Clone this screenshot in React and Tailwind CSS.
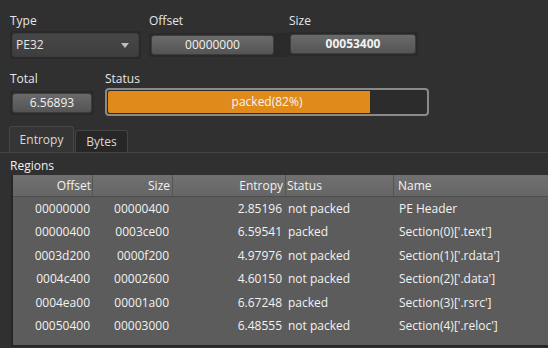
const rows = [
  ["00000000", "00000400", "2.85196", "not packed", "PE Header"],
  ["00000400", "0003ce00", "6.59541", "packed", "Section(0)['.text']"],
  ["0003d200", "0000f200", "4.97976", "not packed", "Section(1)['.rdata']"],
  ["0004c400", "00002600", "4.60150", "not packed", "Section(2)['.data']"],
  ["0004ea00", "00001a00", "6.67248", "packed", "Section(3)['.rsrc']"],
  ["00050400", "00003000", "6.48555", "not packed", "Section(4)['.reloc']"],
];

function ValueBox({ children, bold, width }) {
  return (
    <div className="p-[2px] bg-[#2a2a2a] rounded-[2px]">
      <div
        className={`${width} h-[20px] flex items-center justify-center rounded-[3px] border border-[#3c3c3c] bg-gradient-to-b from-[#6a6a6a] to-[#545454] text-[12px] text-[#f2f2f2] ${bold ? "font-bold" : ""}`}
      >
        {children}
      </div>
    </div>
  );
}

export default function App() {
  return (
    <div className="w-[548px] h-[348px] bg-[#303030] text-[#e6e6e6] text-[12px] overflow-hidden font-['Open_Sans',sans-serif]">
      {/* Type / Offset / Size */}
      <div className="flex pl-[10px] pt-[13px]">
        <div className="w-[139px]">
          <div className="leading-[16px] h-[18px]">Type</div>
          <div className="p-[2px] bg-[#2a2a2a] w-[131px] rounded-[2px]">
            <div className="h-[24px] flex items-center justify-between pl-[3px] pr-[9px] rounded-[3px] border border-[#3e3e3e] bg-gradient-to-b from-[#474747] to-[#3e3e3e]">
              <span>PE32</span>
              <svg width="8" height="5" viewBox="0 0 8 5">
                <path d="M0 0H8L4 5Z" fill="#bdbdbd" />
              </svg>
            </div>
          </div>
        </div>
        <div className="w-[139px]">
          <div className="leading-[16px] h-[20px]">Offset</div>
          <ValueBox width="w-[123px]">00000000</ValueBox>
        </div>
        <div>
          <div className="leading-[16px] h-[19px] ml-[1px]">Size</div>
          <ValueBox width="w-[126px]" bold>
            00053400
          </ValueBox>
        </div>
      </div>

      {/* Total / Status */}
      <div className="flex pl-[10px] pt-[12px]">
        <div className="w-[95px]">
          <div className="leading-[16px] h-[18px]">Total</div>
          <div className="mt-[2px]">
            <div className="p-[2px] bg-[#2a2a2a] inline-block rounded-[2px]">
              <div className="w-[80px] h-[20px] flex items-center justify-center rounded-[3px] border border-[#3c3c3c] bg-gradient-to-b from-[#6a6a6a] to-[#545454] text-[#f2f2f2]">
                6.56893
              </div>
            </div>
          </div>
        </div>
        <div>
          <div className="leading-[16px] h-[17px]">Status</div>
          <div className="relative w-[324px] h-[28px] rounded-[4px] border-2 border-[#8a8a8a] bg-[#2c2c2c] p-[1px]">
            <div className="h-full w-[262px] bg-[#e08a1c] rounded-l-[2px]" />
            <div className="absolute inset-0 flex items-center justify-center text-[#f5f5f5]">
              packed(82%)
            </div>
          </div>
        </div>
      </div>

      {/* Tabs */}
      <div className="mt-[11px] flex items-end pl-[9px] border-b border-[#444] h-[26px]">
        <div className="w-[65px] h-[26px] flex items-center justify-center rounded-t-[3px] border border-b-0 border-[#474747] bg-[#353535] text-[#d8d8d8]">
          Entropy
        </div>
        <div className="w-[53px] h-[22px] ml-[1px] flex items-center justify-center rounded-t-[3px] border border-b-0 border-[#444] bg-[#272727] text-[#d8d8d8]">
          Bytes
        </div>
      </div>

      <div className="pl-[10px] leading-[16px] mt-[5px] h-[17px] text-[#f0f0f0]">Regions</div>

      {/* Table */}
      <div className="ml-[11px] border-l-2 border-b-2 border-[#262626] bg-[#5c5c5c]">
        <div className="flex h-[22px] bg-gradient-to-b from-[#707070] to-[#666] border-b border-[#4e4e4e] text-[#f2f2f2]">
          <div className="w-[80px] pr-[1px] flex items-center justify-end border-r border-[#555]">Offset</div>
          <div className="w-[80px] pr-[2px] flex items-center justify-end border-r border-[#555]">Size</div>
          <div className="w-[113px] pr-[2px] flex items-center justify-end border-r border-[#555]">Entropy</div>
          <div className="w-[108px] pl-[1px] flex items-center border-r border-[#555]">Status</div>
          <div className="flex-1 pl-[4px] flex items-center">Name</div>
        </div>
        <div className="pb-[7px]">
          {rows.map((r) => (
            <div key={r[4]} className="flex h-[23.5px] items-center text-[#f2f2f2]">
              <div className="w-[80px] pr-[3px] text-right">{r[0]}</div>
              <div className="w-[80px] pr-[4px] text-right">{r[1]}</div>
              <div className="w-[113px] pr-[4px] text-right">{r[2]}</div>
              <div className="w-[108px] pl-[2px]">{r[3]}</div>
              <div className="flex-1 pl-[5px]">{r[4]}</div>
            </div>
          ))}
        </div>
      </div>
    </div>
  );
}
